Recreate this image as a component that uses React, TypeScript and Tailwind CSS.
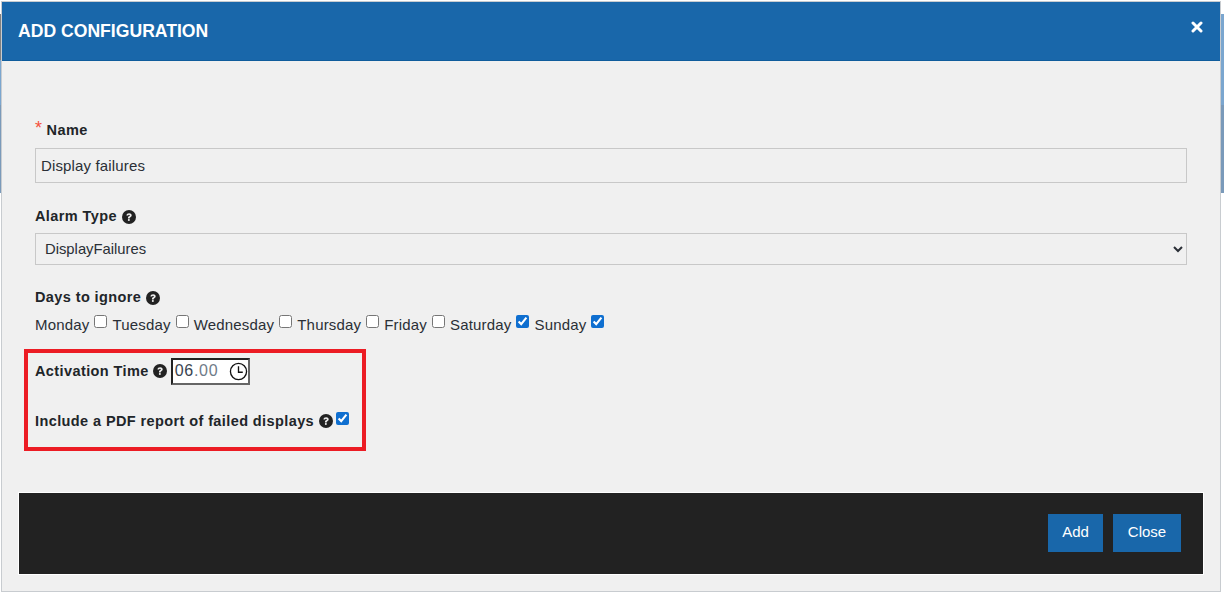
import React from "react";

const HelpIcon = () => (
  <svg className="inline-block h-[14px] w-[14px] shrink-0 text-[#222]" viewBox="0 0 24 24" aria-hidden="true">
    <circle cx="12" cy="12" r="12" fill="currentColor" />
    <path
      d="M7.6 9.4c.2-2.6 2-4 4.6-4 2.5 0 4.4 1.4 4.4 3.7 0 1.7-1 2.6-2.2 3.4-.9.6-1.2 1-1.2 1.9v.3h-3v-.6c0-1.6.6-2.4 1.8-3.2.9-.6 1.4-1 1.4-1.6 0-.8-.6-1.2-1.4-1.2-1 0-1.4.6-1.5 1.5H7.6z"
      fill="#f0f0f0"
    />
    <rect x="10.2" y="15.6" width="3" height="3" fill="#f0f0f0" />
  </svg>
);

const days = [
  { name: "Monday", on: false },
  { name: "Tuesday", on: false },
  { name: "Wednesday", on: false },
  { name: "Thursday", on: false },
  { name: "Friday", on: false },
  { name: "Saturday", on: true },
  { name: "Sunday", on: true },
];

export default function App() {
  return (
    <div className="relative h-[595px] w-[1224px] overflow-hidden bg-white font-['Liberation_Sans',Arial,sans-serif] text-[#212529]">
      {/* page peeking out behind the modal */}
      <div className="absolute right-0 top-[14px] h-[91px] w-[3px] bg-[#7ba6cf]" />
      <div className="absolute right-0 top-[105px] h-[88px] w-[3px] bg-[#7a9aba]" />
      <div className="absolute left-0 top-[14px] h-[46px] w-px bg-[#808080]" />
      <div className="absolute left-0 top-[60px] h-[45px] w-px bg-[#7ba6cf]" />
      <div className="absolute left-0 top-[105px] h-[88px] w-px bg-[#7a9aba]" />

      <div className="relative ml-px mt-px flex h-[591px] w-[1220px] flex-col border border-[#c8ccd0] bg-[#f0f0f0]">
        <div className="flex h-[59px] items-start justify-between border-b border-[#0f5c9c] bg-[#1967aa] pl-[16px] pr-[17px] text-white">
          <h1 className="mt-[19px] text-[17.6px] font-bold leading-[20px]">ADD CONFIGURATION</h1>
          <svg className="mt-[19px] h-[12px] w-[12px]" viewBox="0 0 12 12" aria-hidden="true">
            <path d="M2 2l8 8M10 2l-8 8" stroke="white" strokeWidth="3" strokeLinecap="round" />
          </svg>
        </div>

        <div className="flex-1 pl-[33px] pr-[33px] pt-[60px] text-[15px]">
          <label className="flex h-[20px] items-center text-[14.5px] font-bold tracking-[0.45px]">
            <span className="mr-[4px] -translate-y-[3px] text-[18px] font-normal text-[#f5503c]">*</span>
            Name
          </label>
          <input
            readOnly
            value="Display failures"
            className="mt-[7px] block h-[35px] w-full border border-[#c8c8c8] bg-[#f0f0f0] px-[5px] text-[15px] tracking-[0.15px] text-[#2a2f36] outline-none"
          />

          <label className="mt-[24px] flex h-[20px] items-center gap-[5px] text-[14.5px] font-bold tracking-[0.4px]">
            Alarm Type <HelpIcon />
          </label>
          <select
            defaultValue="DisplayFailures"
            className="mt-[6px] block h-[32px] w-full border border-[#c8c8c8] bg-[#f0f0f0] pl-[5px] pr-[3px] text-[14.8px] text-[#2a2f36] outline-none"
          >
            <option>DisplayFailures</option>
          </select>

          <label className="mt-[23px] flex h-[20px] items-center gap-[5px] text-[14.5px] font-bold tracking-[0.4px]">
            Days to ignore <HelpIcon />
          </label>
          <div className="mt-[7px] flex h-[20px] items-center tracking-[0.18px] text-[#2a2f36]">
            {days.map((d) => (
              <span key={d.name} className="mr-[5px] flex items-center">
                {d.name}
                <input
                  type="checkbox"
                  defaultChecked={d.on}
                  className="ml-[5px] h-[13px] w-[13px] -translate-y-[4px] accent-[#0f6fd0]"
                />
              </span>
            ))}
          </div>
        </div>

        {/* highlighted section */}
        <div className="absolute left-[22px] top-[347px] flex h-[102px] w-[342px] flex-col border-[4px] border-[#ec1c24] pl-[7px] text-[14.5px] font-bold tracking-[0.4px]">
          <div className="mt-[4px] flex h-[28px] items-center gap-[4px]">
            <span className="translate-y-px">Activation Time</span> <HelpIcon />
            <div className="flex h-[27px] w-[79px] items-center justify-between border-2 border-b-[#666] border-l-[#222] border-r-[#666] border-t-[#222] bg-white pl-[2px] text-[16px] font-normal tracking-[0.7px]">
              <span className="text-[#3a4450]">
                06<span className="text-[#6f7b88]">.00</span>
              </span>
              <svg className="h-[19px] w-[19px]" viewBox="0 0 20 20" fill="none" stroke="#111" strokeWidth="1.4" aria-hidden="true">
                <circle cx="10" cy="10" r="8.5" />
                <path d="M10 4.5V10.8H14.5" />
              </svg>
            </div>
          </div>
          <div className="mt-[27px] flex h-[20px] items-center gap-[5px]">
            Include a PDF report of failed displays
            <span className="flex -translate-y-px">
              <HelpIcon />
            </span>
            <input type="checkbox" defaultChecked className="-ml-[2px] h-[13px] w-[13px] -translate-y-[4px] accent-[#0f6fd0]" />
          </div>
        </div>

        <div className="mb-[16px] ml-[16px] mr-[16px] flex h-[83px] items-center justify-end gap-[10px] border border-white bg-[#222] pb-[2px] pr-[22px]">
          <button className="h-[38px] w-[55px] bg-[#1967aa] text-[15px] text-white">Add</button>
          <button className="h-[38px] w-[68px] bg-[#1967aa] text-[15px] text-white">Close</button>
        </div>
      </div>
    </div>
  );
}
